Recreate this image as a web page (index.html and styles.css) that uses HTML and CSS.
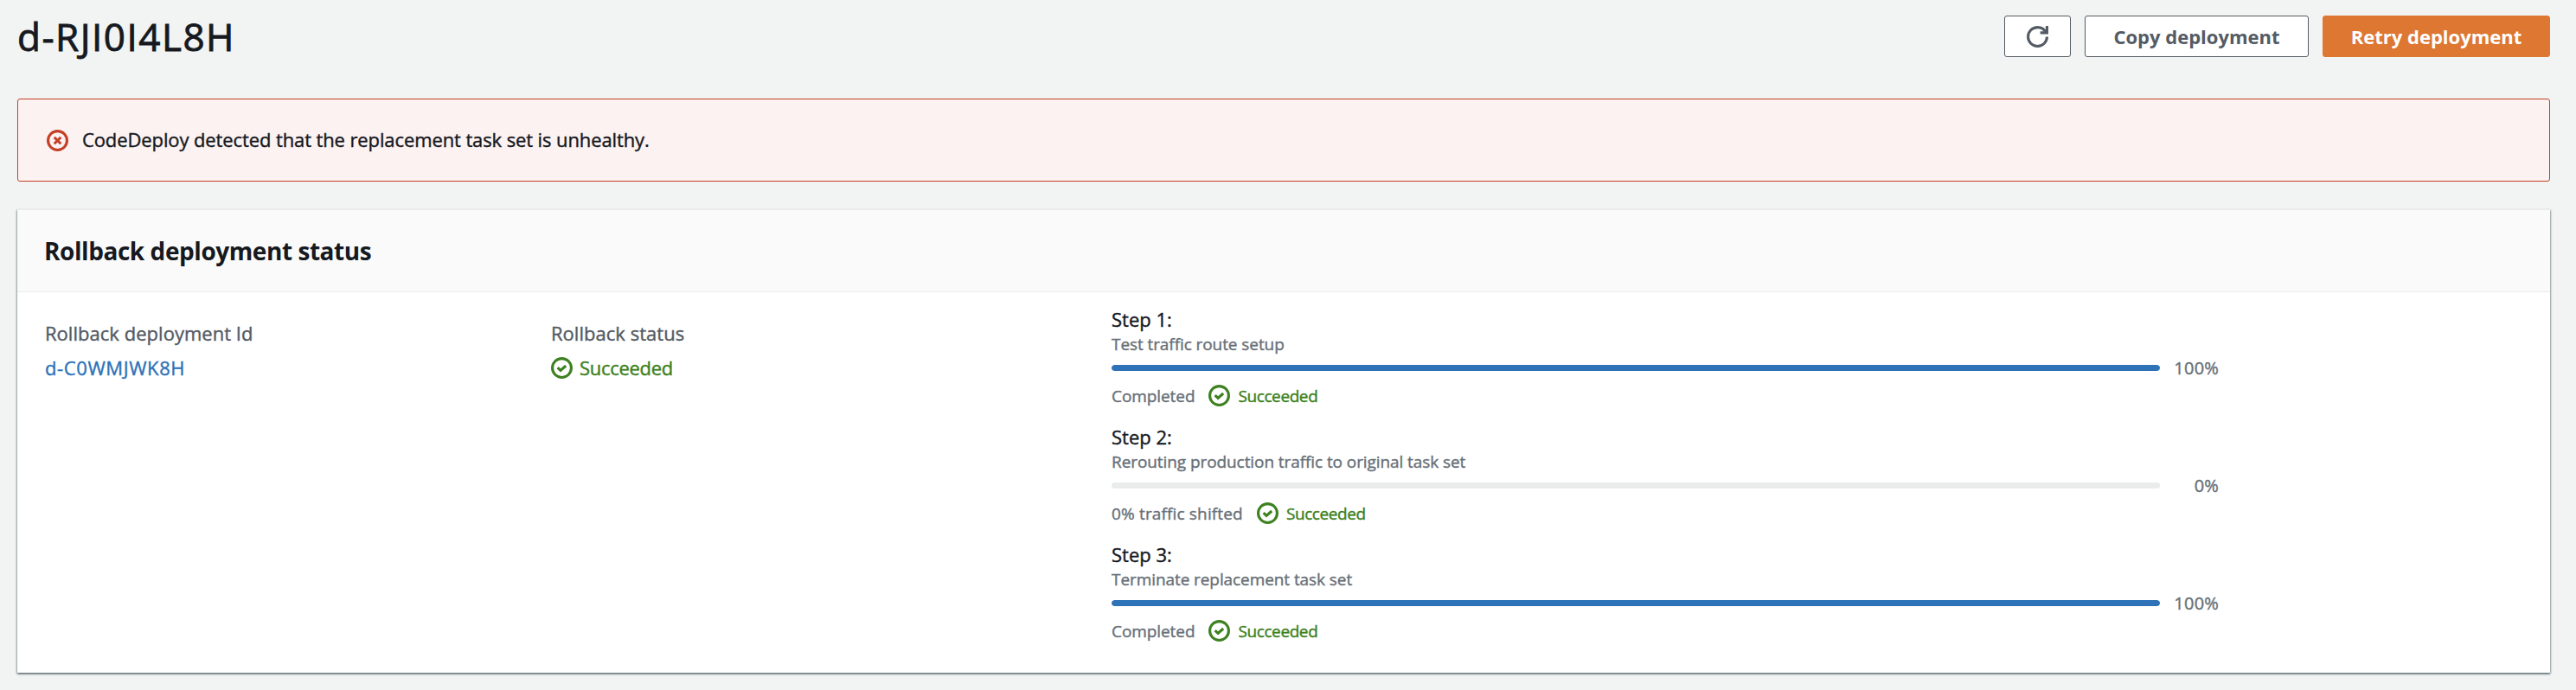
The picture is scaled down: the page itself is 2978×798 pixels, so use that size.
FILE: index.html
```html
<!DOCTYPE html>
<html lang="en">
<head>
<meta charset="utf-8">
<title>d-RJI0I4L8H</title>
<link rel="stylesheet" href="styles.css">
</head>
<body>
<svg class="sprite" aria-hidden="true">
  <symbol id="ok" viewBox="0 0 16 16">
    <circle cx="8" cy="8" r="7"/>
    <path d="M4.9 7.8l2.2 2.1 3.9-3.5"/>
  </symbol>
</svg>
<main class="page">
  <header class="header">
    <h1 class="title">d-RJI0I4L8H</h1>
    <div class="actions">
      <button class="btn btn-icon" aria-label="Refresh">
        <svg class="icon" viewBox="0 0 16 16"><path d="M15 8c0 3.9-3.1 7-7 7s-7-3.1-7-7 3.1-7 7-7c2.8 0 5.2 1.6 6.3 4"/><path d="M10 5h5V0"/></svg>
      </button>
      <button class="btn btn-copy">Copy deployment</button>
      <button class="btn btn-primary">Retry deployment</button>
    </div>
  </header>

  <div class="alert" role="alert">
    <svg class="icon" viewBox="0 0 16 16"><circle cx="8" cy="8" r="7"/><path d="M5.6 5.6l4.8 4.8M10.4 5.6l-4.8 4.8"/></svg>
    <span class="alert-text">CodeDeploy detected that the replacement task set is unhealthy.</span>
  </div>

  <section class="panel">
    <h2 class="panel-title">Rollback deployment status</h2>
    <div class="panel-body">
      <div class="field field-id">
        <div class="label">Rollback deployment Id</div>
        <a class="link">d-C0WMJWK8H</a>
      </div>
      <div class="field field-status">
        <div class="label">Rollback status</div>
        <div class="status"><svg class="icon"><use href="#ok"/></svg>Succeeded</div>
      </div>
      <div class="steps">
        <div class="step">
          <div class="step-name">Step 1:</div>
          <div class="step-desc">Test traffic route setup</div>
          <div class="progress"><div class="track"><div class="fill" style="width:100%"></div></div><span class="percent">100%</span></div>
          <div class="result"><span>Completed</span><span class="done"><svg class="icon"><use href="#ok"/></svg>Succeeded</span></div>
        </div>
        <div class="step">
          <div class="step-name">Step 2:</div>
          <div class="step-desc">Rerouting production traffic to original task set</div>
          <div class="progress"><div class="track"><div class="fill" style="width:0%"></div></div><span class="percent">0%</span></div>
          <div class="result"><span class="shifted">0% traffic shifted</span><span class="done"><svg class="icon"><use href="#ok"/></svg>Succeeded</span></div>
        </div>
        <div class="step">
          <div class="step-name">Step 3:</div>
          <div class="step-desc">Terminate replacement task set</div>
          <div class="progress"><div class="track"><div class="fill" style="width:100%"></div></div><span class="percent">100%</span></div>
          <div class="result"><span>Completed</span><span class="done"><svg class="icon"><use href="#ok"/></svg>Succeeded</span></div>
        </div>
      </div>
    </div>
  </section>
</main>
</body>
</html>
```

FILE: styles.css
```css
* { box-sizing: border-box; }
body {
  margin: 0;
  background: #f2f4f3;
  color: #16191f;
  font: 400 22px/30px "Open Sans", "Noto Sans", sans-serif;
  -webkit-text-stroke: 0.4px currentColor;
}
.page { height: 798px; padding: 18px 30px 0 20px; overflow: hidden; }
.sprite { position: absolute; width: 0; height: 0; }
.icon {
  flex: none;
  width: 25px;
  height: 25px;
  fill: none;
  stroke: currentColor;
  stroke-width: 2;
  overflow: visible;
}

.header { display: flex; justify-content: space-between; align-items: center; height: 48px; }
.title {
  margin: 0;
  font-size: 44px;
  line-height: 48px;
  font-weight: 400;
  letter-spacing: 1.5px;
  -webkit-text-stroke: 0.9px currentColor;
}
.actions { display: flex; gap: 16px; }
.btn {
  display: flex;
  align-items: center;
  justify-content: center;
  height: 48px;
  padding: 0;
  border: 1px solid #545b64;
  border-radius: 3px;
  background: #fff;
  color: #545b64;
  font: 700 22px/30px "Open Sans", "Noto Sans", sans-serif;
  -webkit-text-stroke: 0;
}
.btn-icon { width: 77px; }
.btn-copy { width: 259px; }
.btn-primary { width: 263px; border-color: #dd7732; background: #dd7732; color: #fff; }

.alert {
  display: flex;
  align-items: center;
  gap: 16px;
  height: 96px;
  margin-top: 48px;
  padding-left: 33px;
  border: 1px solid #c33f25;
  border-radius: 3px;
  background: #fcf2f1;
}
.alert .icon { color: #c33f25; }
.alert-text { margin-top: -2px; letter-spacing: -0.11px; }

.panel {
  height: 536px;
  margin-top: 32px;
  border-top: 1px solid #eaeded;
  background: #fff;
  box-shadow: 0 2px 2px 0 rgba(0, 28, 36, 0.3), 1px 1px 2px 0 rgba(0, 28, 36, 0.3), -1px 1px 2px 0 rgba(0, 28, 36, 0.3);
}
.panel-title {
  height: 95px;
  margin: 0;
  padding-left: 31px;
  border-bottom: 1px solid #eaeded;
  background: #fafafa;
  font-size: 28px;
  line-height: 94px;
  font-weight: 700;
  letter-spacing: -0.44px;
  -webkit-text-stroke: 0;
}
.panel-body { display: flex; padding: 17px 0 0 32px; }
.field { padding-top: 10px; line-height: 40px; }
.field-id { width: 585px; }
.field-status { width: 648px; }
.label { color: #545b64; letter-spacing: 0.03px; }
.link { color: #2e73b8; letter-spacing: 0.6px; }
.status { display: flex; align-items: center; gap: 8px; color: #3d8120; letter-spacing: -0.3px; }

.steps { display: flex; flex-direction: column; gap: 17px; width: 1280px; }
.step-name { line-height: 28px; padding-bottom: 2px; }
.step-desc, .result { color: #687078; font-size: 19px; letter-spacing: -0.08px; }
.step-desc { line-height: 26px; margin-bottom: -1px; }
.progress { display: flex; align-items: center; justify-content: space-between; height: 31px; }
.track { width: 1212px; height: 7px; border-radius: 3.5px; background: #eaeceb; overflow: hidden; }
.fill { height: 100%; border-radius: 3.5px; background: #2e73b8; }
.percent { color: #687078; font-size: 20px; letter-spacing: 0.2px; }
.result { display: flex; align-items: center; gap: 16px; height: 33px; }
.shifted { letter-spacing: 0.15px; }
.done { display: flex; align-items: center; gap: 9px; color: #3d8120; letter-spacing: -0.4px; }
```
